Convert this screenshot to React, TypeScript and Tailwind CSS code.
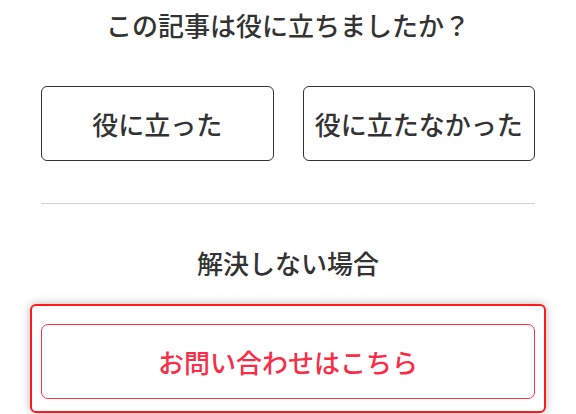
const FONT = { fontFamily: '"Noto Sans CJK JP", "Noto Sans", sans-serif' };

const App = () => {
  return (
    <div className="w-[576px] h-[414px] overflow-hidden bg-white" style={FONT}>
      <div className="flex h-[48px] items-center justify-center text-[26px] font-medium text-[#333]">
        この記事は役に立ちましたか？
      </div>

      {/* 評価ボタン */}
      <div className="mx-[41px] mt-[38px] flex gap-[29px]">
        <button className="flex h-[75px] flex-1 items-center justify-center rounded-[6px] border border-[#333] text-[26px] font-medium text-[#333]">
          役に立った
        </button>
        <button className="flex h-[75px] flex-1 items-center justify-center rounded-[6px] border border-[#333] text-[26px] font-medium text-[#333]">
          役に立たなかった
        </button>
      </div>

      <div className="mx-[41px] mt-[42px] h-px bg-[#d0d0d0]" />

      <div className="mt-[38px] flex h-[40px] items-center justify-center text-[26px] font-medium text-[#333]">
        解決しない場合
      </div>

      {/* お問い合わせ */}
      <div className="mx-[30px] mt-[22px] rounded-[6px] border-2 border-[#ff1a1a] px-[9px] pt-[18px] pb-[12px] shadow-[0_0_10px_rgba(0,0,0,0.28)]">
        <button className="flex h-[75px] w-full items-center justify-center rounded-[7px] border border-[#ff3347] text-[26px] font-medium text-[#fa2d48]">
          お問い合わせはこちら
        </button>
      </div>
    </div>
  );
};

export default App;
